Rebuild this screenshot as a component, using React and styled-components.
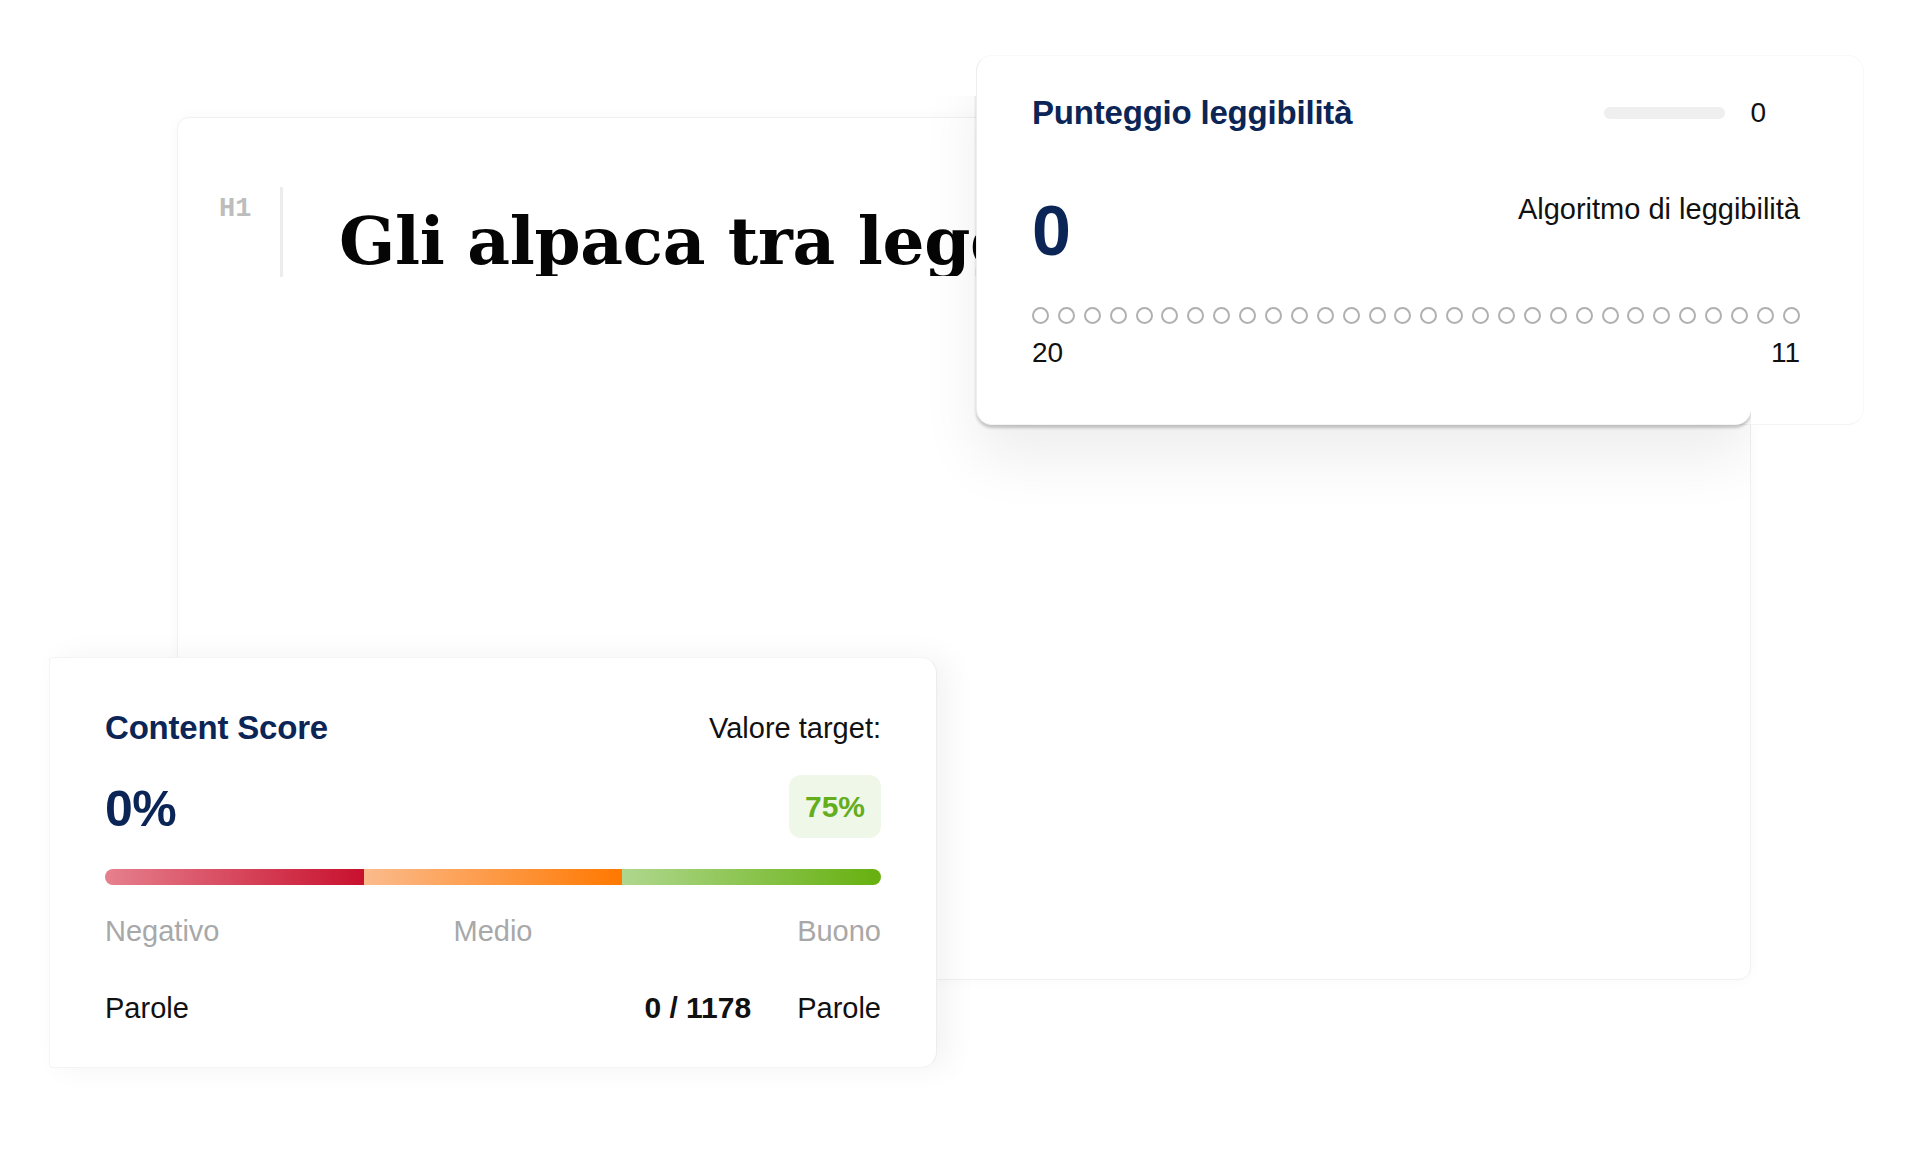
import React from "react";
import styled, { createGlobalStyle } from "styled-components";

const Global = createGlobalStyle`
  html, body { margin: 0; padding: 0; background: #ffffff; }
  body { font-family: "Liberation Sans", Arial, Helvetica, sans-serif; color: #111; }
  * { box-sizing: border-box; }
`;

const NAVY = "#0c2557";

const Stage = styled.div`
  position: relative;
  width: 1920px;
  height: 1160px;
  overflow: hidden;
  background: #fff;
  padding: 117px 0 0 177px;
`;

const EditorCard = styled.section`
  position: relative;
  z-index: 1;
  width: 1574px;
  height: 863px;
  background: #fff;
  border: 1px solid #f1f1f1;
  border-radius: 12px;
  box-shadow: 0 0 14px rgba(0, 0, 0, 0.03);
  padding: 69px 0 0 41px;
  overflow: hidden;
`;

const HeadingRow = styled.div`
  display: flex;
  align-items: flex-start;
  white-space: nowrap;
`;

const TagLabel = styled.span`
  font-family: "Liberation Mono", "Courier New", monospace;
  font-weight: 700;
  font-size: 27px;
  line-height: 27px;
  color: #bdbdbd;
  margin-top: 9px;
  width: 38px;
`;

const Separator = styled.span`
  width: 3px;
  height: 90px;
  background: #ececec;
  margin-left: 23px;
`;

const Title = styled.h1`
  margin: 19px 0 0 56px;
  width: 640px;
  overflow: hidden;
  font-family: "DejaVu Serif", "Liberation Serif", serif;
  font-weight: 700;
  font-size: 66px;
  line-height: 70px;
  letter-spacing: -0.3px;
  color: #050505;
`;

const FloatingCard = styled.section`
  position: absolute;
  z-index: 2;
  background: #fff;
`;

const ReadabilityCard = styled(FloatingCard)`
  left: 976px;
  top: 55px;
  width: 888px;
  height: 370px;
  border-radius: 16px;
  border: 1px solid #f8f8f8;
  border-left-color: #ededed;
  border-bottom-color: #f4f4f4;
  padding: 37px 63px 0 55px;
  &::before {
    content: "";
    position: absolute;
    left: -1px;
    top: 0;
    bottom: -1px;
    right: 112px;
    border-radius: 16px 0 16px 16px;
    box-shadow: 0 3px 3px rgba(0, 0, 0, 0.2), 0 34px 60px rgba(0, 0, 0, 0.07);
    clip-path: inset(40px 0 -160px -120px);
    z-index: -1;
    pointer-events: none;
  }
`;

const ContentCard = styled(FloatingCard)`
  left: 49px;
  top: 657px;
  width: 888px;
  height: 411px;
  border-radius: 4px 16px 16px 4px;
  border: 1px solid #f4f4f4;
  border-right-color: #ececec;
  box-shadow: 12px 0 30px rgba(0, 0, 0, 0.05);
  padding: 50px 55px 0 55px;
`;

const HeaderRow = styled.div`
  display: flex;
  align-items: center;
  justify-content: space-between;
  height: 40px;
`;

const CardTitle = styled.h2`
  margin: 0;
  font-size: 33px;
  line-height: 40px;
  font-weight: 700;
  color: ${NAVY};
  letter-spacing: -0.2px;
`;

const MiniMeter = styled.div`
  display: flex;
  align-items: center;
  gap: 25px;
  margin-right: 34px;
`;

const MiniTrack = styled.span`
  width: 121px;
  height: 12px;
  border-radius: 6px;
  background: #efefef;
`;

const Text = styled.span`
  font-size: ${(p) => p.$size || 29}px;
  line-height: ${(p) => p.$size || 29}px;
  font-weight: ${(p) => (p.$bold ? 700 : 400)};
  color: ${(p) => p.$color || "#111"};
  white-space: nowrap;
`;

const ScoreRow = styled.div`
  display: flex;
  justify-content: space-between;
  align-items: ${(p) => p.$align || "flex-start"};
  margin-top: ${(p) => p.$mt || 0}px;
`;

const BigNumber = styled.span`
  font-size: ${(p) => p.$size}px;
  line-height: ${(p) => p.$size}px;
  font-weight: 700;
  color: ${NAVY};
  margin-top: ${(p) => p.$mt || 0}px;
  letter-spacing: -0.5px;
`;

const DotsRow = styled.div`
  display: flex;
  justify-content: space-between;
  margin-top: 41px;
`;

const Dot = styled.span`
  width: 17px;
  height: 17px;
  border-radius: 50%;
  border: 2px solid #b0b0b0;
`;

const ScaleEnds = styled.div`
  display: flex;
  justify-content: space-between;
  margin-top: 15px;
`;

const TargetBadge = styled.span`
  display: flex;
  align-items: center;
  height: 63px;
  padding: 0 16px;
  border-radius: 12px;
  background: #eff7e9;
  color: #64ad1c;
  font-size: 30px;
  font-weight: 700;
`;

const Bar = styled.div`
  display: grid;
  grid-template-columns: repeat(3, 1fr);
  height: 16px;
  margin-top: 31px;
  border-radius: 8px;
  overflow: hidden;
  box-shadow: inset 0 -2px 0 rgba(0, 0, 0, 0.08);
`;

const BarSegment = styled.span`
  background: linear-gradient(90deg, ${(p) => p.$from}, ${(p) => p.$to});
`;

const Labels = styled.div`
  display: grid;
  grid-template-columns: 1fr auto 1fr;
  margin-top: 32px;
  & > :last-child { text-align: right; }
`;

const WordsRow = styled.div`
  display: flex;
  align-items: baseline;
  margin-top: 47px;
`;

const Spacer = styled.span`
  flex: 1;
`;

const WordsCount = styled(Text)`
  margin-right: 46px;
`;

export default function App() {
  const dots = Array.from({ length: 30 });
  return (
    <>
      <Global />
      <Stage>
        <EditorCard>
          <HeadingRow>
            <TagLabel>H1</TagLabel>
            <Separator />
            <Title>Gli alpaca tra legg</Title>
          </HeadingRow>
        </EditorCard>

        <ReadabilityCard>
          <HeaderRow>
            <CardTitle>Punteggio leggibilità</CardTitle>
            <MiniMeter>
              <MiniTrack />
              <Text $size={28}>0</Text>
            </MiniMeter>
          </HeaderRow>
          <ScoreRow $mt={62}>
            <BigNumber $size={70} $mt={1}>0</BigNumber>
            <Text>Algoritmo di leggibilità</Text>
          </ScoreRow>
          <DotsRow>
            {dots.map((_, i) => (
              <Dot key={i} />
            ))}
          </DotsRow>
          <ScaleEnds>
            <Text $size={28}>20</Text>
            <Text $size={28}>11</Text>
          </ScaleEnds>
        </ReadabilityCard>

        <ContentCard>
          <HeaderRow>
            <CardTitle>Content Score</CardTitle>
            <Text>Valore target:</Text>
          </HeaderRow>
          <ScoreRow $mt={27} $align="center">
            <BigNumber $size={50} $mt={4}>0%</BigNumber>
            <TargetBadge>75%</TargetBadge>
          </ScoreRow>
          <Bar>
            <BarSegment $from="#e6808d" $to="#c8102e" />
            <BarSegment $from="#fbbb8c" $to="#ff7800" />
            <BarSegment $from="#afd78e" $to="#66b00e" />
          </Bar>
          <Labels>
            <Text $color="#a8a8a8">Negativo</Text>
            <Text $color="#a8a8a8">Medio</Text>
            <Text $color="#a8a8a8">Buono</Text>
          </Labels>
          <WordsRow>
            <Text>Parole</Text>
            <Spacer />
            <WordsCount $bold $size={30}>0 / 1178</WordsCount>
            <Text>Parole</Text>
          </WordsRow>
        </ContentCard>
      </Stage>
    </>
  );
}
